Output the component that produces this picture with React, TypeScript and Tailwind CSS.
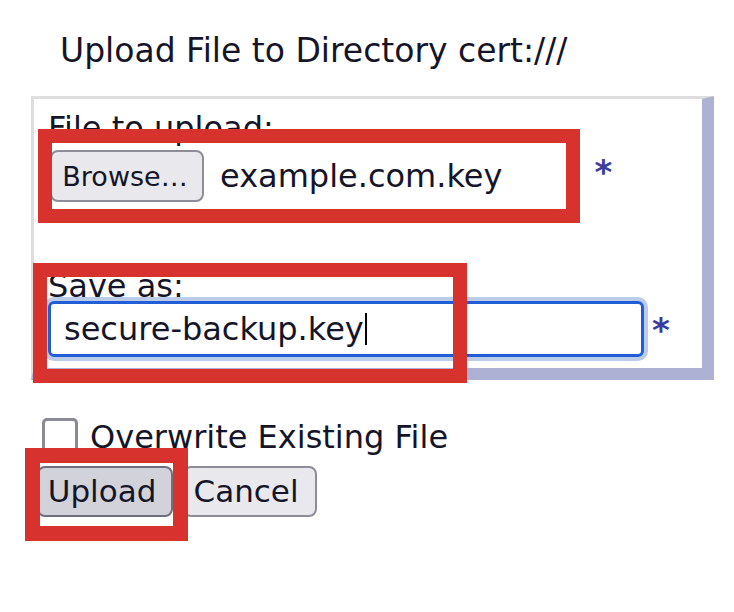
export default function App() {
  const font = { fontFamily: '"DejaVu Sans", Verdana, sans-serif' };

  return (
    <div
      className="relative w-[734px] h-[612px] bg-white text-[#15152a] overflow-hidden"
      style={font}
    >
      {/* Title */}
      <div className="pl-[60px] pt-[31px] text-[33px] leading-[40px] whitespace-nowrap">
        Upload File to Directory cert:///
      </div>

      {/* Form panel */}
      <div className="ml-[31px] mt-[25px] w-[683px] h-[284px] bg-white border-t-[3px] border-l-[3px] border-r-[12px] border-b-[12px] border-t-[#dedede] border-l-[#dedede] border-r-[#adb1d3] border-b-[#adb1d3] pl-[14px] pt-[14px]">
        <div className="text-[32px] leading-[30px] whitespace-nowrap">File to upload:</div>

        <div className="mt-[7px] flex items-center h-[52px]">
          <button className="w-[154px] h-[52px] ml-[2px] rounded-[8px] border-2 border-[#8d8d99] bg-[#e9e9ed] text-[27px] leading-none text-[#15152a] pr-[4px]">
            Browse…
          </button>
          <span className="ml-[16px] text-[32px] leading-none whitespace-nowrap">example.com.key</span>
          <span className="ml-[92px] -mt-[8px] text-[34px] font-bold leading-none text-[#3b3ba0]">*</span>
        </div>

        <div className="mt-[69px] text-[32px] leading-[30px] whitespace-nowrap">Save as:</div>

        <div className="flex items-center">
          <div className="w-[596px] h-[56px] rounded-[6px] border-[3px] border-[#1f5ed6] shadow-[0_0_0_4px_#bccbe8] flex items-center pl-[13px] text-[32px] leading-none whitespace-nowrap">
            secure-backup.key
            <span className="inline-block w-[2px] h-[32px] bg-black ml-[1px]" />
          </div>
          <span className="ml-[8px] mt-[2px] text-[34px] font-bold leading-none text-[#3b3ba0]">*</span>
        </div>
      </div>

      {/* Overwrite checkbox */}
      <div className="mt-[38px] pl-[42px] flex items-center h-[37px]">
        <span className="w-[36px] h-[37px] rounded-[5px] border-[3px] border-[#8a8a96] bg-white" />
        <span className="ml-[12px] text-[32px] leading-none whitespace-nowrap">Overwrite Existing File</span>
      </div>

      {/* Buttons */}
      <div className="mt-[11px] pl-[37px] flex gap-[10px]">
        <button className="w-[136px] h-[51px] rounded-[8px] border-2 border-[#6f6f7d] bg-[#d2d2da] text-[31px] leading-none text-[#15152a] pr-[6px]">
          Upload
        </button>
        <button className="w-[134px] h-[51px] rounded-[8px] border-2 border-[#8d8d99] bg-[#e9e9ed] text-[31px] leading-none text-[#15152a] pr-[8px]">
          Cancel
        </button>
      </div>

      {/* Red annotation boxes */}
      <div className="absolute left-[38px] top-[129px] w-[542px] h-[94px] border-[14px] border-[#d8322e]" />
      <div className="absolute left-[33px] top-[263px] w-[434px] h-[120px] border-[14px] border-[#d8322e]" />
      <div className="absolute left-[25px] top-[448px] w-[163px] h-[93px] border-[15px] border-[#d8322e]" />
    </div>
  );
}
